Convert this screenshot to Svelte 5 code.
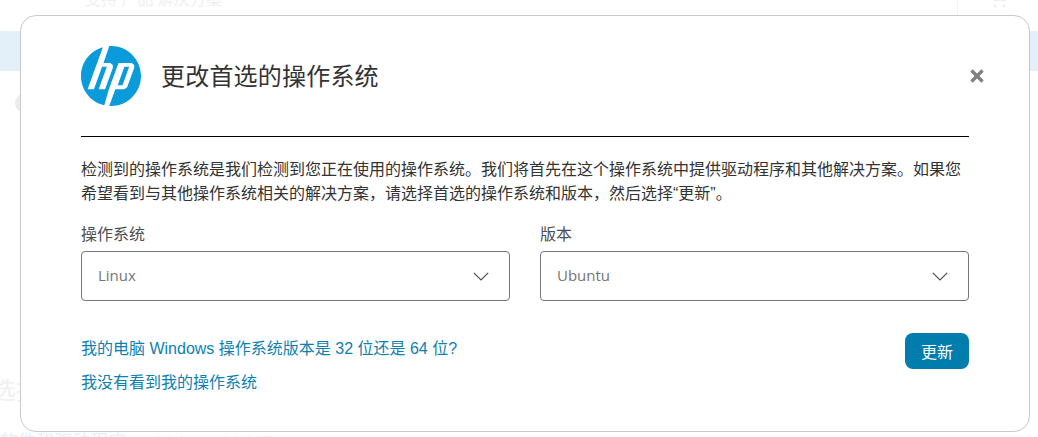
<script lang="ts">
  const osOptions = ['Linux', 'Windows', 'Chrome OS'];
  const versionOptions = ['Ubuntu', 'Red Hat', 'SUSE'];

  let os = $state('Linux');
  let version = $state('Ubuntu');
  let open = $state(true);
</script>

<!-- page behind the dialog, mostly washed out -->
<div class="page" aria-hidden="true">
  <div class="topbar">
    <span class="topbar-text">支持 产品 解决方案</span>
    <span class="topbar-sep"></span>
    <span class="topbar-cart">
      <svg viewBox="0 0 20 16" width="20" height="16" fill="none" stroke="#efefef" stroke-width="2">
        <path d="M1 1h16l-2 7H4z" />
        <circle cx="5" cy="14" r="1.5" fill="#efefef" stroke="none" />
        <circle cx="14" cy="14" r="1.5" fill="#efefef" stroke="none" />
      </svg>
    </span>
  </div>
  <div class="band"></div>
  <div class="crumb"></div>
  <div class="page-title">选择</div>
  <div class="page-sub">软件和驱动程序 <span class="page-sub-links">全部打开 | 全部折叠</span></div>
</div>

{#if open}
  <div class="overlay">
    <div class="modal" role="dialog" aria-labelledby="modal-title">
      <header class="modal-head">
        <svg class="logo" viewBox="0 0 24 24" width="60" height="60" aria-label="HP">
          <path
            fill="#0a9bdb"
            d="M12 24c-.24 0-.47-.01-.71-.02l2.45-6.73h3.38c.59 0 1.24-.45 1.44-1.01l2.66-7.31c.44-1.2-.25-2.12-1.53-2.12h-4.69l-3.94 10.82h-.01L9.32 23.7C3.97 22.48 0 17.71 0 12 0 6.5 3.7 1.87 8.75.45L6.46 6.75h-.01L2.64 17.25h2.54l3.24-8.91h1.91l-3.24 8.91h2.54l3.02-8.3c.44-1.2-.25-2.12-1.53-2.12H8.99L11.33.02C11.55.01 11.78 0 12 0c6.63 0 12 5.37 12 12s-5.37 12-12 12zm7.27-15.66h-1.91l-2.67 7.34h1.91l2.67-7.34z"
          />
        </svg>
        <h2 id="modal-title">更改首选的操作系统</h2>
        <button class="close" aria-label="关闭" onclick={() => (open = false)}>
          <svg viewBox="0 0 14 14" width="14" height="14" fill="none" stroke="#808080" stroke-width="3.4">
            <line x1="1.5" y1="1.5" x2="12.5" y2="12.5" />
            <line x1="12.5" y1="1.5" x2="1.5" y2="12.5" />
          </svg>
        </button>
      </header>

      <p class="intro">检测到的操作系统是我们检测到您正在使用的操作系统。我们将首先在这个操作系统中提供驱动程序和其他解决方案。如果您希望看到与其他操作系统相关的解决方案，请选择首选的操作系统和版本，然后选择“更新”。</p>

      <div class="fields">
        <label class="field">
          <span class="field-label">操作系统</span>
          <span class="select-wrap">
            <select bind:value={os}>
              {#each osOptions as o}
                <option value={o}>{o}</option>
              {/each}
            </select>
            <svg class="chev" viewBox="0 0 16 9" width="16" height="9" fill="none" stroke="#4e4e4e" stroke-width="1.2">
              <path d="M.8.8 8 8l7.2-7.2" />
            </svg>
          </span>
        </label>
        <label class="field">
          <span class="field-label">版本</span>
          <span class="select-wrap">
            <select bind:value={version}>
              {#each versionOptions as v}
                <option value={v}>{v}</option>
              {/each}
            </select>
            <svg class="chev" viewBox="0 0 16 9" width="16" height="9" fill="none" stroke="#4e4e4e" stroke-width="1.2">
              <path d="M.8.8 8 8l7.2-7.2" />
            </svg>
          </span>
        </label>
      </div>

      <div class="modal-foot">
        <div class="links">
          <a href="#bits">我的电脑 Windows 操作系统版本是 32 位还是 64 位?</a>
          <a href="#missing">我没有看到我的操作系统</a>
        </div>
        <button class="update">更新</button>
      </div>
    </div>
  </div>
{/if}

<style>
  :global(body) {
    margin: 0;
    background: #fff;
    font-family: "Liberation Sans", "Noto Sans CJK SC", sans-serif;
  }

  .page {
    height: 437px;
    overflow: hidden;
    position: relative;
    color: #f0f0f0;
  }

  .topbar {
    height: 31px;
    display: flex;
    padding: 0 28px 0 85px;
    font-size: 16px;
    line-height: 0;
  }

  .topbar-text {
    flex: 1;
  }

  .topbar-sep {
    width: 1px;
    height: 15px;
    margin-right: 32px;
    background: #f3f3f3;
  }

  .topbar-cart {
    margin-top: -8px;
    line-height: 1;
  }

  .band {
    height: 40px;
    background: #e3f0f9;
  }

  .crumb {
    width: 20px;
    height: 20px;
    margin: 22px 0 0 15px;
    border-radius: 50%;
    background: #ececec;
  }

  .page-title {
    position: absolute;
    left: -8px;
    top: 376px;
    font-size: 24px;
    line-height: 30px;
  }

  .page-sub {
    position: absolute;
    left: 0;
    top: 432px;
    font-size: 18px;
    line-height: 20px;
    color: #e3f0f9;
  }

  .page-sub-links {
    margin-left: 20px;
    font-size: 14px;
    color: #efefef;
  }

  .overlay {
    position: absolute;
    inset: 0;
    height: 437px;
    padding: 15px 8px 0 20px;
    box-sizing: border-box;
  }

  .modal {
    box-sizing: border-box;
    width: 1010px;
    height: 417px;
    padding: 30px 60px 0;
    background: #fff;
    border: 1px solid #c9c9c9;
    border-radius: 16px;
  }

  .modal-head {
    display: flex;
    align-items: center;
    gap: 20px;
    height: 60px;
    padding-bottom: 30px;
    border-bottom: 1px solid #000;
  }

  .logo {
    flex-shrink: 0;
  }

  h2 {
    margin: 0 0 3px;
    flex: 1;
    font-size: 24px;
    font-weight: 400;
    letter-spacing: 0.2px;
    color: #333;
  }

  .close {
    padding: 0;
    margin-right: -15px;
    background: none;
    border: none;
    cursor: pointer;
    display: flex;
  }

  .intro {
    margin: 21px 0 0;
    font-size: 16px;
    line-height: 24px;
    color: #333;
  }

  .fields {
    display: grid;
    grid-template-columns: 1fr 1fr;
    gap: 30px;
    margin-top: 17px;
  }

  .field {
    display: flex;
    flex-direction: column;
    gap: 4px;
  }

  .field-label {
    font-size: 16px;
    line-height: 24px;
    color: #4e4e4e;
  }

  .select-wrap {
    position: relative;
    display: block;
  }

  select {
    appearance: none;
    box-sizing: border-box;
    display: block;
    width: 100%;
    height: 50px;
    padding: 0 16px 2px;
    background: #fff;
    border: 1px solid #767676;
    border-radius: 4px;
    font-family: "Open Sans", "Noto Sans CJK SC", sans-serif;
    font-size: 15px;
    color: #767676;
  }

  .chev {
    position: absolute;
    right: 21px;
    top: 21px;
    pointer-events: none;
  }

  .modal-foot {
    display: flex;
    justify-content: space-between;
    align-items: flex-start;
    margin-top: 32px;
  }

  .links {
    display: flex;
    flex-direction: column;
    gap: 10px;
    padding-top: 4px;
  }

  a {
    font-size: 16px;
    line-height: 24px;
    color: #0e7fb0;
    text-decoration: none;
  }

  .update {
    width: 64px;
    height: 36px;
    padding: 0;
    background: #007dad;
    border: none;
    border-radius: 8px;
    color: #fff;
    font-family: inherit;
    font-size: 16px;
    cursor: pointer;
  }
</style>
